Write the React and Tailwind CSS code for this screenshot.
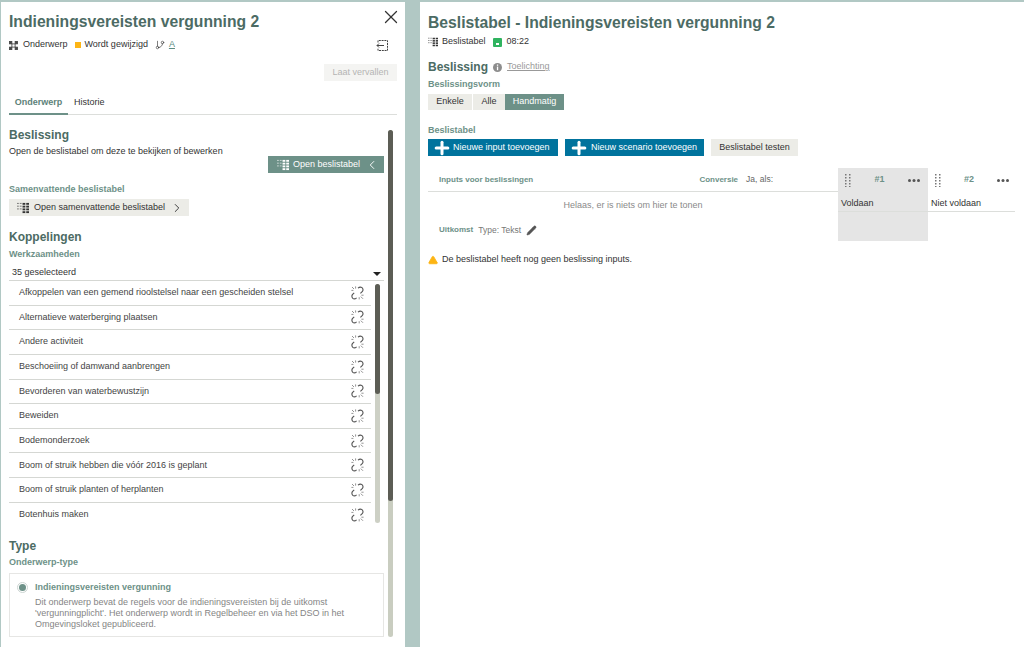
import { X, Plus, Pencil, ChevronLeft, ChevronRight, GitBranch, TriangleAlert } from 'lucide-react'

const activities = [
  'Afkoppelen van een gemend rioolstelsel naar een gescheiden stelsel',
  'Alternatieve waterberging plaatsen',
  'Andere activiteit',
  'Beschoeiing of damwand aanbrengen',
  'Bevorderen van waterbewustzijn',
  'Beweiden',
  'Bodemonderzoek',
  'Boom of struik hebben die vóór 2016 is geplant',
  'Boom of struik planten of herplanten',
  'Botenhuis maken',
]

function TableIcon({ size = 12, className = 'text-[#333]' }) {
  return (
    <svg width={size} height={size} viewBox="0 0 13 13" className={className} fill="currentColor">
      <g opacity="0.65">
        <rect x="0" y="1" width="2" height="1" />
        <rect x="0" y="4" width="2" height="1" />
        <rect x="0" y="7" width="2" height="1" />
        <rect x="3" y="1" width="2" height="1" />
        <rect x="3" y="4" width="2" height="1" />
        <rect x="3" y="7" width="2" height="1" />
      </g>
      <rect x="6" y="1" width="3" height="2" />
      <rect x="6" y="4" width="3" height="2" />
      <rect x="6" y="7" width="3" height="2" />
      <rect x="6" y="10" width="3" height="2" />
      <rect x="10" y="1" width="3" height="2" />
      <rect x="10" y="4" width="3" height="2" />
      <rect x="10" y="7" width="3" height="2" />
      <rect x="10" y="10" width="3" height="2" />
    </svg>
  )
}

function SubjectIcon() {
  return (
    <svg width="9" height="9" viewBox="0 0 11 11" fill="none" stroke="#444" strokeWidth="1">
      <rect x="0.5" y="0.5" width="3" height="3" fill="#444" />
      <rect x="7.5" y="0.5" width="3" height="3" fill="#444" />
      <rect x="0.5" y="7.5" width="3" height="3" fill="#444" />
      <rect x="7.5" y="7.5" width="3" height="3" fill="#444" />
      <path d="M3.5 3.5 H7.5 V7.5 H3.5 Z" />
    </svg>
  )
}

function InfoDot() {
  return (
    <svg width="9" height="9" viewBox="0 0 9 9" className="ml-[5px]">
      <circle cx="4.5" cy="4.5" r="4.5" fill="#8d8d8d" />
      <rect x="3.9" y="1.5" width="1.3" height="1.3" fill="#fff" />
      <rect x="3.9" y="3.6" width="1.3" height="3.6" fill="#fff" />
    </svg>
  )
}

function GripIcon() {
  return (
    <svg width="6" height="13" viewBox="0 0 6 13" fill="#777">
      {[0, 3, 6, 9, 12].map((y) => (
        <g key={y}>
          <rect x="0" y={y} width="1.5" height="1.5" />
          <rect x="4" y={y} width="1.5" height="1.5" />
        </g>
      ))}
    </svg>
  )
}

function Dots() {
  return (
    <svg width="12" height="3" viewBox="0 0 12 3" fill="#555">
      <circle cx="1.5" cy="1.5" r="1.5" />
      <circle cx="6" cy="1.5" r="1.5" />
      <circle cx="10.5" cy="1.5" r="1.5" />
    </svg>
  )
}

function BrokenLink() {
  return (
    <svg width="13" height="14" viewBox="0 0 13 14" fill="none" stroke="#555" strokeWidth="1.1">
      <path d="M7 2.2 Q9 0.3 11 1.6 Q12.8 3.4 11.4 5.4 L9.4 7.4" />
      <path d="M5.6 11.8 Q3.6 13.6 1.8 12.4 Q0.2 10.6 1.4 8.6 L3.2 6.8" />
      <path d="M1 1 L3 3 M4.6 0.4 L4.6 2.6 M0.4 4.4 L2.4 4.4 M9.8 10.6 L12 12.8 M8.2 11.2 L8.2 13.4 M10.4 9.2 L12.6 9.2" stroke="#888" strokeWidth="0.9" />
    </svg>
  )
}

export default function App() {
  return (
    <div className="flex h-[647px] w-[1024px] overflow-hidden bg-[#b1c8c4] pt-[2px] pl-px font-['Liberation_Sans',Arial,sans-serif] text-[9px] text-[#333]">
      <div className="relative flex w-[404px] shrink-0 flex-col bg-white pl-2 pr-2">
        <div className="flex items-start justify-between pt-[10px]">
          <h1 className="text-[15.7px] leading-5 font-bold text-[#4c6b64]">Indieningsvereisten vergunning 2</h1>
          <X size={22} strokeWidth={1.4} className="-mt-[6px] -mr-[5px] text-[#333]" />
        </div>
        <div className="mt-[6px] flex h-[14px] items-center justify-between pr-[8px]">
          <div className="flex items-center">
            <SubjectIcon />
            <span className="ml-[5px]">Onderwerp</span>
            <span className="ml-[7px] h-[6px] w-[6px] bg-[#fdb515]" />
            <span className="ml-[4px]">Wordt gewijzigd</span>
            <GitBranch size={10} strokeWidth={1.5} className="ml-[7px]" />
            <span className="ml-[4px] text-[#5b8b82] underline">A</span>
          </div>
          <svg width="13" height="13" viewBox="0 0 13 13" fill="none" stroke="#444" strokeWidth="1">
            <path d="M2 3.5 V1.5 H11.5 V11.5 H2 V9.5" strokeDasharray="2 0.8" />
            <path d="M8 6.5 H1 M3 4.5 L1 6.5 L3 8.5" />
          </svg>
        </div>
        <div className="mt-[12px] flex justify-end">
          <button className="h-[17px] w-[73px] bg-[#f4f4f2] text-center text-[#b4b4b4]">Laat vervallen</button>
        </div>
        <div className="mt-[14px] flex h-[20px] border-b border-[#dcdedb]">
          <div className="-mb-px w-[59px] border-b-2 border-[#6d9188] pt-[1px] text-center font-bold text-[#5d8279]">Onderwerp</div>
          <div className="ml-[6px] pt-[1px]">Historie</div>
        </div>

        <div className="relative flex-1 pr-[13px]">
          <div className="absolute top-[15px] right-[4px] bottom-[10px] w-[5px] rounded-full bg-[#c9cdc0]">
            <div className="h-[371px] rounded-full bg-[#5c5d55]" />
          </div>
          <h2 className="mt-[12px] text-[12px] leading-4 font-bold text-[#4c6b64]">Beslissing</h2>
          <p className="mt-[2px] leading-[12px]">Open de beslistabel om deze te bekijken of bewerken</p>
          <div className="-mt-px flex justify-end">
            <button className="flex h-[17px] w-[116px] items-center bg-[#6d9188] pl-[9px] text-white">
              <TableIcon className="text-white" />
              <span className="ml-[4px]">Open beslistabel</span>
              <ChevronLeft size={14} strokeWidth={1.6} className="ml-[5px]" />
            </button>
          </div>
          <div className="mt-[10px] leading-[12px] font-bold text-[#6d9188]">Samenvattende beslistabel</div>
          <button className="mt-[4px] flex h-[17px] w-[180px] items-center bg-[#ecece7] pl-[8px]">
            <TableIcon />
            <span className="ml-[5px]">Open samenvattende beslistabel</span>
            <ChevronRight size={14} strokeWidth={1.6} className="ml-[5px]" />
          </button>

          <h2 className="mt-[13px] text-[12px] leading-4 font-bold text-[#4c6b64]">Koppelingen</h2>
          <div className="mt-[3px] leading-[12px] font-bold text-[#6d9188]">Werkzaamheden</div>
          <div className="mt-[5px] flex h-[16px] items-center justify-between border-b border-[#d5d7d3] pr-[3px] pl-[3px]">
            <span>35 geselecteerd</span>
            <span className="mt-[2px] h-0 w-0 border-x-[4px] border-t-[4px] border-x-transparent border-t-[#222]" />
          </div>
          <div className="relative pr-[13px]">
            <div className="absolute top-[3px] right-[4px] bottom-[4px] w-[5px] rounded-full bg-[#cdd0c5]">
              <div className="h-[110px] rounded-full bg-[#5c5d55]" />
            </div>
            {activities.map((a, i) => (
              <div key={a} className={`flex h-[24.65px] items-center justify-between pr-[7px] pl-[10px] text-[#444] ${i < activities.length - 1 ? 'border-b border-[#d5d7d3]' : ''}`}>
                <span>{a}</span>
                <BrokenLink />
              </div>
            ))}
          </div>

          <h2 className="mt-[11px] text-[12px] leading-4 font-bold text-[#4c6b64]">Type</h2>
          <div className="mt-[2px] leading-[12px] font-bold text-[#6d9188]">Onderwerp-type</div>
          <div className="mt-[5px] flex h-[64px] border border-[#e6e6e4] pt-[7px] pl-[7px]">
            <span className="mt-[1px] flex h-[11px] w-[11px] items-center justify-center rounded-full border border-[#ccd5d2]">
              <span className="h-[7px] w-[7px] rounded-full bg-[#6d9188]" />
            </span>
            <div className="ml-[7px]">
              <div className="leading-[12px] font-bold text-[#6d9188]">Indieningsvereisten vergunning</div>
              <p className="mt-[4px] w-[320px] leading-[10.6px] text-[#858585]">
                Dit onderwerp bevat de regels voor de indieningsvereisten bij de uitkomst 'vergunningplicht'. Het onderwerp wordt in Regelbeheer en via het DSO in het Omgevingsloket gepubliceerd.
              </p>
            </div>
          </div>
        </div>
      </div>

      <div className="ml-[15px] min-w-0 flex-1 bg-white pl-2">
        <h1 className="mt-[11px] text-[15.7px] leading-5 font-bold text-[#4c6b64]">Beslistabel - Indieningsvereisten vergunning 2</h1>
        <div className="mt-[3px] flex h-[12px] items-center">
          <TableIcon size={10} />
          <span className="ml-[4px]">Beslistabel</span>
          <svg width="9" height="9" viewBox="0 0 9 9" className="ml-[7px]">
            <rect width="9" height="9" rx="1" fill="#2fb35f" />
            <rect x="3" y="5" width="3" height="2" fill="#fff" />
          </svg>
          <span className="ml-[5px]">08:22</span>
        </div>
        <div className="mt-[11px] flex h-4 items-center">
          <h2 className="text-[12px] font-bold text-[#4c6b64]">Beslissing</h2>
          <InfoDot />
          <span className="ml-[5px] text-[#999] underline">Toelichting</span>
        </div>
        <div className="mt-[3px] leading-[12px] font-bold text-[#6d9188]">Beslissingsvorm</div>
        <div className="mt-[4px] flex h-[16px]">
          <div className="flex w-[44px] items-center justify-center bg-[#ecece7]">Enkele</div>
          <div className="ml-px flex w-[32px] items-center justify-center bg-[#ecece7]">Alle</div>
          <div className="flex w-[59px] items-center justify-center bg-[#6d9188] text-white">Handmatig</div>
        </div>
        <div className="mt-[14px] leading-[12px] font-bold text-[#6d9188]">Beslistabel</div>
        <div className="mt-[3px] flex h-[17px]">
          <button className="flex w-[130px] items-center bg-[#00739d] pl-[4px] text-white">
            <Plus size={20} strokeWidth={3.6} />
            <span className="ml-px">Nieuwe input toevoegen</span>
          </button>
          <button className="ml-[7px] flex w-[139px] items-center bg-[#00739d] pl-[4px] text-white">
            <Plus size={20} strokeWidth={3.6} />
            <span className="ml-[2px]">Nieuw scenario toevoegen</span>
          </button>
          <button className="ml-[7px] w-[87px] bg-[#ecece7]">Beslistabel testen</button>
        </div>

        <div className="mt-[12px] flex h-[73px] w-[587px]">
          <div className="w-[410px]">
            <div className="flex h-[24px] items-center justify-between border-b border-[#dcdedb] pr-[65px] pl-[11px]">
              <span className="text-[8px] font-bold text-[#6d9188]">Inputs voor beslissingen</span>
              <span className="flex items-center">
                <b className="text-[8px] text-[#6d9188]">Conversie</b>
                <span className="ml-[8px] text-[8.5px] text-[#666]">Ja, als:</span>
              </span>
            </div>
            <div className="mt-[7px] text-center leading-[12px] text-[#8a8a8a]">Helaas, er is niets om hier te tonen</div>
            <div className="mt-[13px] flex items-center pl-[11px]">
              <b className="text-[8px] text-[#6d9188]">Uitkomst</b>
              <span className="ml-[5px] text-[8.5px] text-[#777]">Type: Tekst</span>
              <Pencil size={11} fill="#555" strokeWidth={1} className="ml-[5px] text-[#555]" />
            </div>
          </div>
          <div className="w-[90px] bg-[#e5e5e5]">
            <div className="flex h-[24px] items-center justify-between pr-[8px] pl-[7px]">
              <GripIcon /><b className="text-[9px] text-[#6d9188]">#1</b><Dots />
            </div>
            <div className="flex h-[20px] items-center border-b border-[#dcdedb] pt-[4px] pl-[3px]">Voldaan</div>
          </div>
          <div className="w-[87px]">
            <div className="flex h-[24px] items-center justify-between pr-[6px] pl-[7px]">
              <GripIcon /><b className="text-[9px] text-[#6d9188]">#2</b><Dots />
            </div>
            <div className="flex h-[20px] items-center border-b border-[#dcdedb] pt-[4px] pl-[3px]">Niet voldaan</div>
          </div>
        </div>
        <div className="mt-[12px] flex items-center">
          <TriangleAlert size={10} fill="#fdb515" className="text-[#fdb515]" />
          <span className="ml-[4px]">De beslistabel heeft nog geen beslissing inputs.</span>
        </div>
      </div>
    </div>
  )
}
